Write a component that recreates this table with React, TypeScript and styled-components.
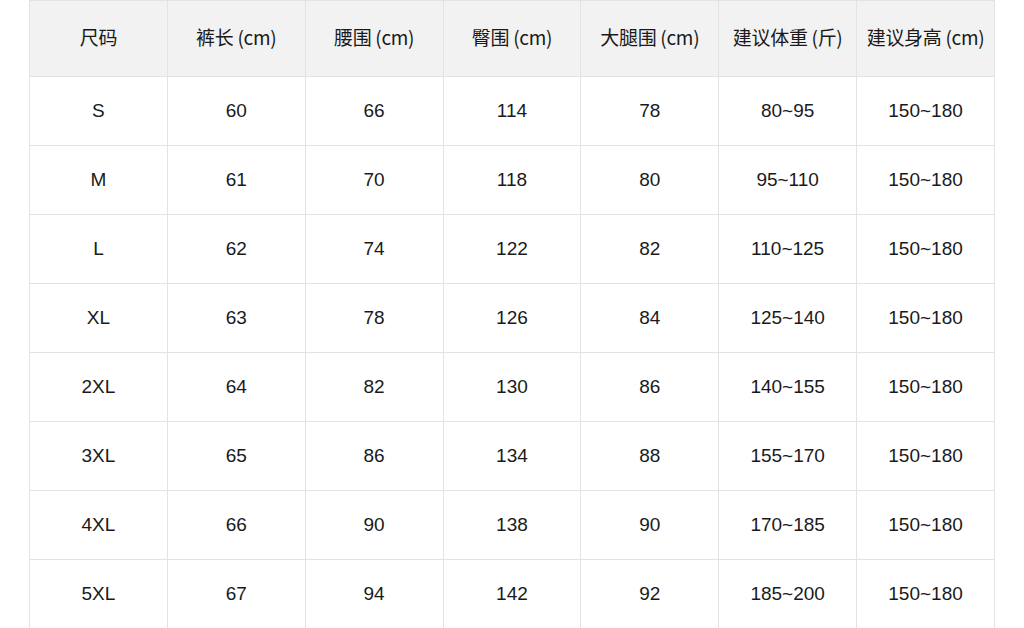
import React from 'react';
import styled, { createGlobalStyle } from 'styled-components';

const GlobalStyle = createGlobalStyle`
  html, body {
    margin: 0;
    padding: 0;
    background: #ffffff;
  }
  body {
    font-family: "Liberation Sans", "Noto Sans CJK SC", sans-serif;
    color: #1a1a1a;
  }
`;

const headers = ['尺码', '裤长 (cm)', '腰围 (cm)', '臀围 (cm)', '大腿围 (cm)', '建议体重 (斤)', '建议身高 (cm)'];

const rows = [
  ['S', '60', '66', '114', '78', '80~95', '150~180'],
  ['M', '61', '70', '118', '80', '95~110', '150~180'],
  ['L', '62', '74', '122', '82', '110~125', '150~180'],
  ['XL', '63', '78', '126', '84', '125~140', '150~180'],
  ['2XL', '64', '82', '130', '86', '140~155', '150~180'],
  ['3XL', '65', '86', '134', '88', '155~170', '150~180'],
  ['4XL', '66', '90', '138', '90', '170~185', '150~180'],
  ['5XL', '67', '94', '142', '92', '185~200', '150~180'],
];

export default function App() {
  return (
    <>
      <GlobalStyle />
      <Page>
        <SizeTable>
          <thead>
            <tr>
              {headers.map((h) => (
                <HeadCell key={h}>{h}</HeadCell>
              ))}
            </tr>
          </thead>
          <tbody>
            {rows.map((r) => (
              <tr key={r[0]}>
                {r.map((v, i) => (
                  <BodyCell key={i}>{v}</BodyCell>
                ))}
              </tr>
            ))}
          </tbody>
        </SizeTable>
      </Page>
    </>
  );
}

const Page = styled.div`
  width: 1024px;
  height: 628px;
  overflow: hidden;
  padding-left: 29px;
  box-sizing: border-box;
`;

const SizeTable = styled.table`
  width: 966px;
  border-collapse: collapse;
  table-layout: fixed;
`;

const HeadCell = styled.th`
  height: 71px;
  padding: 0 0 4px;
  background: #f2f2f2;
  border: 1px solid #e3e3e3;
  font-family: "Noto Sans CJK SC", "Liberation Sans", sans-serif;
  font-weight: 400;
  font-size: 19px;
  letter-spacing: -0.3px;
  text-align: center;
  vertical-align: middle;
`;

const BodyCell = styled.td`
  height: 68px;
  padding: 0;
  border: 1px solid #e3e3e3;
  font-size: 19px;
  text-align: center;
  vertical-align: middle;
`;
